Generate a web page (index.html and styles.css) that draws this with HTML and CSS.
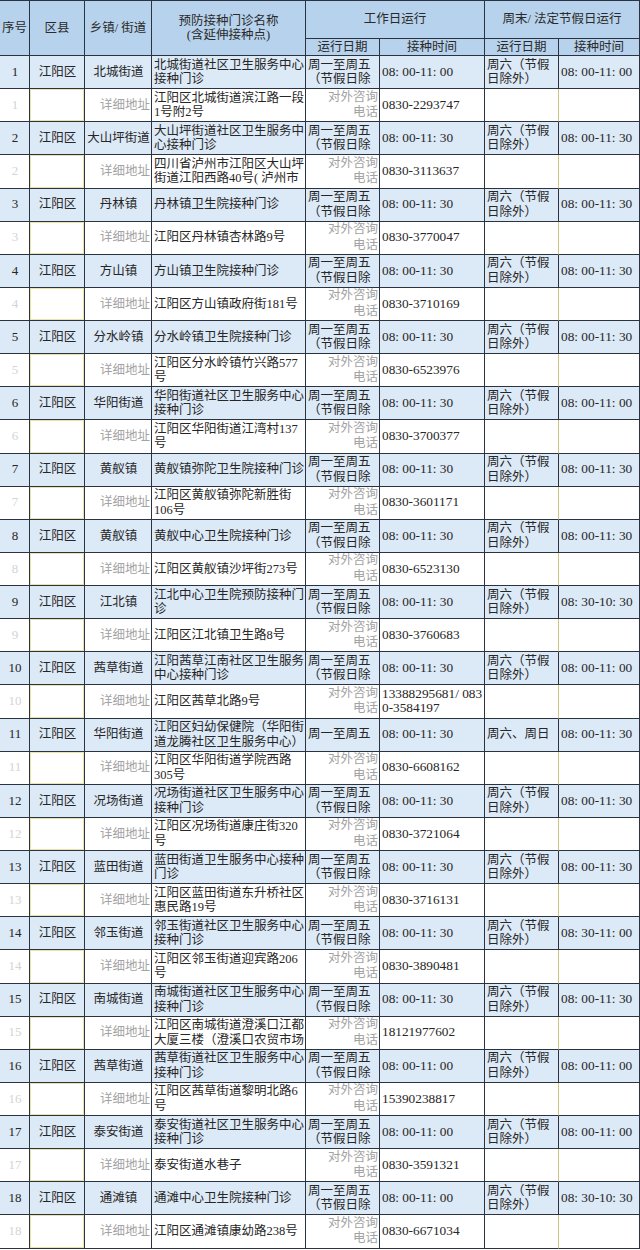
FILE: index.html
```html
<!DOCTYPE html>
<html lang="zh-CN">
<head>
<meta charset="utf-8">
<title>江阳区预防接种门诊</title>
<link rel="stylesheet" href="styles.css">
</head>
<body>
<table class="sched">
<colgroup>
<col class="w1"><col class="w2"><col class="w3"><col class="w4"><col class="w5"><col class="w6"><col class="w7"><col class="w8">
</colgroup>
<thead>
<tr class="h1">
<th rowspan="2">序号</th><th rowspan="2">区县</th><th rowspan="2">乡镇/ 街道</th><th rowspan="2">预防接种门诊名称<br>(含延伸接种点)</th>
<th colspan="2">工作日运行</th><th colspan="2">周末/ 法定节假日运行</th>
</tr>
<tr class="h2"><th>运行日期</th><th>接种时间</th><th>运行日期</th><th>接种时间</th></tr>
</thead>
<tbody>
<tr class="m"><td class="seq">1</td><td class="ctr">江阳区</td><td class="ctr">北城街道</td><td class="nm"><div class="clip">北城街道社区卫生服务中心接种门诊</div></td><td class="dt"><div class="clip">周一至周五（节假日除</div></td><td class="num">08: 00-11: 00</td><td class="dt"><div class="clip">周六（节假日除外）</div></td><td class="num">08: 00-11: 00</td></tr>
<tr class="s"><td class="seq">1</td><td class="blank"></td><td class="lbl">详细地址</td><td class="nm"><div class="clip">江阳区北城街道滨江路一段1号附2号</div></td><td class="lbl"><div class="tel">对外咨询<br>电话</div></td><td class="num">0830-2293747</td><td class="wk"></td><td></td></tr>

<tr class="m"><td class="seq">2</td><td class="ctr">江阳区</td><td class="ctr">大山坪街道</td><td class="nm"><div class="clip">大山坪街道社区卫生服务中心接种门诊</div></td><td class="dt"><div class="clip">周一至周五（节假日除</div></td><td class="num">08: 00-11: 30</td><td class="dt"><div class="clip">周六（节假日除外）</div></td><td class="num">08: 00-11: 30</td></tr>
<tr class="s"><td class="seq">2</td><td class="blank"></td><td class="lbl">详细地址</td><td class="nm"><div class="clip">四川省泸州市江阳区大山坪街道江阳西路40号( 泸州市</div></td><td class="lbl"><div class="tel">对外咨询<br>电话</div></td><td class="num">0830-3113637</td><td class="wk"></td><td></td></tr>

<tr class="m"><td class="seq">3</td><td class="ctr">江阳区</td><td class="ctr">丹林镇</td><td class="nm"><div class="clip">丹林镇卫生院接种门诊</div></td><td class="dt"><div class="clip">周一至周五（节假日除</div></td><td class="num">08: 00-11: 30</td><td class="dt"><div class="clip">周六（节假日除外）</div></td><td class="num">08: 00-11: 30</td></tr>
<tr class="s"><td class="seq">3</td><td class="blank"></td><td class="lbl">详细地址</td><td class="nm"><div class="clip">江阳区丹林镇杏林路9号</div></td><td class="lbl"><div class="tel">对外咨询<br>电话</div></td><td class="num">0830-3770047</td><td class="wk"></td><td></td></tr>

<tr class="m"><td class="seq">4</td><td class="ctr">江阳区</td><td class="ctr">方山镇</td><td class="nm"><div class="clip">方山镇卫生院接种门诊</div></td><td class="dt"><div class="clip">周一至周五（节假日除</div></td><td class="num">08: 00-11: 30</td><td class="dt"><div class="clip">周六（节假日除外）</div></td><td class="num">08: 00-11: 30</td></tr>
<tr class="s"><td class="seq">4</td><td class="blank"></td><td class="lbl">详细地址</td><td class="nm"><div class="clip">江阳区方山镇政府街181号</div></td><td class="lbl"><div class="tel">对外咨询<br>电话</div></td><td class="num">0830-3710169</td><td class="wk"></td><td></td></tr>

<tr class="m"><td class="seq">5</td><td class="ctr">江阳区</td><td class="ctr">分水岭镇</td><td class="nm"><div class="clip">分水岭镇卫生院接种门诊</div></td><td class="dt"><div class="clip">周一至周五（节假日除</div></td><td class="num">08: 00-11: 30</td><td class="dt"><div class="clip">周六（节假日除外）</div></td><td class="num">08: 00-11: 30</td></tr>
<tr class="s"><td class="seq">5</td><td class="blank"></td><td class="lbl">详细地址</td><td class="nm"><div class="clip">江阳区分水岭镇竹兴路577号</div></td><td class="lbl"><div class="tel">对外咨询<br>电话</div></td><td class="num">0830-6523976</td><td class="wk"></td><td></td></tr>

<tr class="m"><td class="seq">6</td><td class="ctr">江阳区</td><td class="ctr">华阳街道</td><td class="nm"><div class="clip">华阳街道社区卫生服务中心接种门诊</div></td><td class="dt"><div class="clip">周一至周五（节假日除</div></td><td class="num">08: 00-11: 30</td><td class="dt"><div class="clip">周六（节假日除外）</div></td><td class="num">08: 00-11: 00</td></tr>
<tr class="s"><td class="seq">6</td><td class="blank"></td><td class="lbl">详细地址</td><td class="nm"><div class="clip">江阳区华阳街道江湾村137号</div></td><td class="lbl"><div class="tel">对外咨询<br>电话</div></td><td class="num">0830-3700377</td><td class="wk"></td><td></td></tr>

<tr class="m"><td class="seq">7</td><td class="ctr">江阳区</td><td class="ctr">黄舣镇</td><td class="nm"><div class="clip">黄舣镇弥陀卫生院接种门诊</div></td><td class="dt"><div class="clip">周一至周五（节假日除</div></td><td class="num">08: 00-11: 30</td><td class="dt"><div class="clip">周六（节假日除外）</div></td><td class="num">08: 00-11: 30</td></tr>
<tr class="s"><td class="seq">7</td><td class="blank"></td><td class="lbl">详细地址</td><td class="nm"><div class="clip">江阳区黄舣镇弥陀新胜街106号</div></td><td class="lbl"><div class="tel">对外咨询<br>电话</div></td><td class="num">0830-3601171</td><td class="wk"></td><td></td></tr>

<tr class="m"><td class="seq">8</td><td class="ctr">江阳区</td><td class="ctr">黄舣镇</td><td class="nm"><div class="clip">黄舣中心卫生院接种门诊</div></td><td class="dt"><div class="clip">周一至周五（节假日除</div></td><td class="num">08: 00-11: 30</td><td class="dt"><div class="clip">周六（节假日除外）</div></td><td class="num">08: 00-11: 30</td></tr>
<tr class="s"><td class="seq">8</td><td class="blank"></td><td class="lbl">详细地址</td><td class="nm"><div class="clip">江阳区黄舣镇沙坪街273号</div></td><td class="lbl"><div class="tel">对外咨询<br>电话</div></td><td class="num">0830-6523130</td><td class="wk"></td><td></td></tr>

<tr class="m"><td class="seq">9</td><td class="ctr">江阳区</td><td class="ctr">江北镇</td><td class="nm"><div class="clip">江北中心卫生院预防接种门诊</div></td><td class="dt"><div class="clip">周一至周五（节假日除</div></td><td class="num">08: 00-11: 30</td><td class="dt"><div class="clip">周六（节假日除外）</div></td><td class="num">08: 30-10: 30</td></tr>
<tr class="s"><td class="seq">9</td><td class="blank"></td><td class="lbl">详细地址</td><td class="nm"><div class="clip">江阳区江北镇卫生路8号</div></td><td class="lbl"><div class="tel">对外咨询<br>电话</div></td><td class="num">0830-3760683</td><td class="wk"></td><td></td></tr>

<tr class="m"><td class="seq">10</td><td class="ctr">江阳区</td><td class="ctr">茜草街道</td><td class="nm"><div class="clip">江阳茜草江南社区卫生服务中心接种门诊</div></td><td class="dt"><div class="clip">周一至周五（节假日除</div></td><td class="num">08: 00-11: 30</td><td class="dt"><div class="clip">周六（节假日除外）</div></td><td class="num">08: 00-11: 00</td></tr>
<tr class="s"><td class="seq">10</td><td class="blank"></td><td class="lbl">详细地址</td><td class="nm"><div class="clip">江阳区茜草北路9号</div></td><td class="lbl"><div class="tel">对外咨询<br>电话</div></td><td class="num">13388295681/ 083<br>0-3584197</td><td class="wk"></td><td></td></tr>

<tr class="m"><td class="seq">11</td><td class="ctr">江阳区</td><td class="ctr">华阳街道</td><td class="nm"><div class="clip">江阳区妇幼保健院（华阳街道龙腾社区卫生服务中心）</div></td><td class="dt"><div class="clip">周一至周五</div></td><td class="num">08: 00-11: 30</td><td class="dt"><div class="clip">周六、周日</div></td><td class="num">08: 00-11: 30</td></tr>
<tr class="s"><td class="seq">11</td><td class="blank"></td><td class="lbl">详细地址</td><td class="nm"><div class="clip">江阳区华阳街道学院西路305号</div></td><td class="lbl"><div class="tel">对外咨询<br>电话</div></td><td class="num">0830-6608162</td><td class="wk"></td><td></td></tr>

<tr class="m"><td class="seq">12</td><td class="ctr">江阳区</td><td class="ctr">况场街道</td><td class="nm"><div class="clip">况场街道社区卫生服务中心接种门诊</div></td><td class="dt"><div class="clip">周一至周五（节假日除</div></td><td class="num">08: 00-11: 30</td><td class="dt"><div class="clip">周六（节假日除外）</div></td><td class="num">08: 00-11: 30</td></tr>
<tr class="s"><td class="seq">12</td><td class="blank"></td><td class="lbl">详细地址</td><td class="nm"><div class="clip">江阳区况场街道康庄街320号</div></td><td class="lbl"><div class="tel">对外咨询<br>电话</div></td><td class="num">0830-3721064</td><td class="wk"></td><td></td></tr>

<tr class="m"><td class="seq">13</td><td class="ctr">江阳区</td><td class="ctr">蓝田街道</td><td class="nm"><div class="clip">蓝田街道卫生服务中心接种门诊</div></td><td class="dt"><div class="clip">周一至周五（节假日除</div></td><td class="num">08: 00-11: 30</td><td class="dt"><div class="clip">周六（节假日除外）</div></td><td class="num">08: 00-11: 30</td></tr>
<tr class="s"><td class="seq">13</td><td class="blank"></td><td class="lbl">详细地址</td><td class="nm"><div class="clip">江阳区蓝田街道东升桥社区惠民路19号</div></td><td class="lbl"><div class="tel">对外咨询<br>电话</div></td><td class="num">0830-3716131</td><td class="wk"></td><td></td></tr>

<tr class="m"><td class="seq">14</td><td class="ctr">江阳区</td><td class="ctr">邻玉街道</td><td class="nm"><div class="clip">邻玉街道社区卫生服务中心接种门诊</div></td><td class="dt"><div class="clip">周一至周五（节假日除</div></td><td class="num">08: 00-11: 30</td><td class="dt"><div class="clip">周六（节假日除外）</div></td><td class="num">08: 30-11: 00</td></tr>
<tr class="s"><td class="seq">14</td><td class="blank"></td><td class="lbl">详细地址</td><td class="nm"><div class="clip">江阳区邻玉街道迎宾路206号</div></td><td class="lbl"><div class="tel">对外咨询<br>电话</div></td><td class="num">0830-3890481</td><td class="wk"></td><td></td></tr>

<tr class="m"><td class="seq">15</td><td class="ctr">江阳区</td><td class="ctr">南城街道</td><td class="nm"><div class="clip">南城街道社区卫生服务中心接种门诊</div></td><td class="dt"><div class="clip">周一至周五（节假日除</div></td><td class="num">08: 00-11: 30</td><td class="dt"><div class="clip">周六（节假日除外）</div></td><td class="num">08: 00-11: 30</td></tr>
<tr class="s"><td class="seq">15</td><td class="blank"></td><td class="lbl">详细地址</td><td class="nm"><div class="clip">江阳区南城街道澄溪口江都大厦三楼（澄溪口农贸市场</div></td><td class="lbl"><div class="tel">对外咨询<br>电话</div></td><td class="num">18121977602</td><td class="wk"></td><td></td></tr>

<tr class="m"><td class="seq">16</td><td class="ctr">江阳区</td><td class="ctr">茜草街道</td><td class="nm"><div class="clip">茜草街道社区卫生服务中心接种门诊</div></td><td class="dt"><div class="clip">周一至周五（节假日除</div></td><td class="num">08: 00-11: 00</td><td class="dt"><div class="clip">周六（节假日除外）</div></td><td class="num">08: 00-11: 00</td></tr>
<tr class="s"><td class="seq">16</td><td class="blank"></td><td class="lbl">详细地址</td><td class="nm"><div class="clip">江阳区茜草街道黎明北路6号</div></td><td class="lbl"><div class="tel">对外咨询<br>电话</div></td><td class="num">15390238817</td><td class="wk"></td><td></td></tr>

<tr class="m"><td class="seq">17</td><td class="ctr">江阳区</td><td class="ctr">泰安街道</td><td class="nm"><div class="clip">泰安街道社区卫生服务中心接种门诊</div></td><td class="dt"><div class="clip">周一至周五（节假日除</div></td><td class="num">08: 00-11: 00</td><td class="dt"><div class="clip">周六（节假日除外）</div></td><td class="num">08: 00-11: 00</td></tr>
<tr class="s"><td class="seq">17</td><td class="blank"></td><td class="lbl">详细地址</td><td class="nm"><div class="clip">泰安街道水巷子</div></td><td class="lbl"><div class="tel">对外咨询<br>电话</div></td><td class="num">0830-3591321</td><td class="wk"></td><td></td></tr>

<tr class="m"><td class="seq">18</td><td class="ctr">江阳区</td><td class="ctr">通滩镇</td><td class="nm"><div class="clip">通滩中心卫生院接种门诊</div></td><td class="dt"><div class="clip">周一至周五（节假日除</div></td><td class="num">08: 00-11: 00</td><td class="dt"><div class="clip">周六（节假日除外）</div></td><td class="num">08: 30-10: 30</td></tr>
<tr class="s"><td class="seq">18</td><td class="blank"></td><td class="lbl">详细地址</td><td class="nm"><div class="clip">江阳区通滩镇康幼路238号</div></td><td class="lbl"><div class="tel">对外咨询<br>电话</div></td><td class="num">0830-6671034</td><td class="wk"></td><td></td></tr>
</tbody>
</table>
</body>
</html>
```

FILE: styles.css
```css
html, body {
  margin: 0;
  padding: 0;
  background: #ffffff;
}

body {
  font-family: "Liberation Serif", "Noto Sans CJK SC", serif;
  font-size: 12.5px;
  line-height: 14.5px;
  color: #262626;
}

.sched {
  width: 640px;
  table-layout: fixed;
  border-collapse: separate;
  border-spacing: 0;
  border-top: 1px solid #2b3340;
}

.w1 { width: 30px; }
.w2 { width: 55px; }
.w3 { width: 67px; }
.w4 { width: 154px; }
.w5 { width: 74px; }
.w6 { width: 105px; }
.w7 { width: 74px; }
.w8 { width: 81px; }

.sched th,
.sched td {
  padding: 0 1px 0 2px;
  border-right: 1px solid #2b3340;
  border-bottom: 1px solid #2b3340;
  vertical-align: middle;
  overflow: hidden;
  box-sizing: border-box;
}

.sched th {
  background: #b7d2ec;
  font-weight: normal;
  text-align: center;
  color: #2a2a2a;
  padding: 0;
}

.h1 { height: 38px; }
.h2 { height: 17px; }

.m, .s { height: 33.14px; }

.m td { background: #dce9f6; }
.s td { background: #ffffff; }

.seq {
  text-align: center;
  font-size: 13px;
  padding: 0;
}

.s .seq { color: #d4d4d4; }

.ctr { text-align: center; }

.clip {
  max-height: 29px;
  overflow: hidden;
}

.tel {
  line-height: 15.5px;
  max-height: 31px;
  overflow: hidden;
}

.nm { text-align: left; }

.dt { text-align: left; }

.num {
  font-size: 13.3px;
  text-align: left;
  white-space: nowrap;
}

.lbl {
  text-align: right;
  color: #a3a3a3;
}

.s .blank {
  box-shadow: inset 1px 1px 0 #ebe4a8, inset -1px -1px 0 #ebe4a8;
}

.s .wk {
  border-right-color: #cdc57e;
}
```
